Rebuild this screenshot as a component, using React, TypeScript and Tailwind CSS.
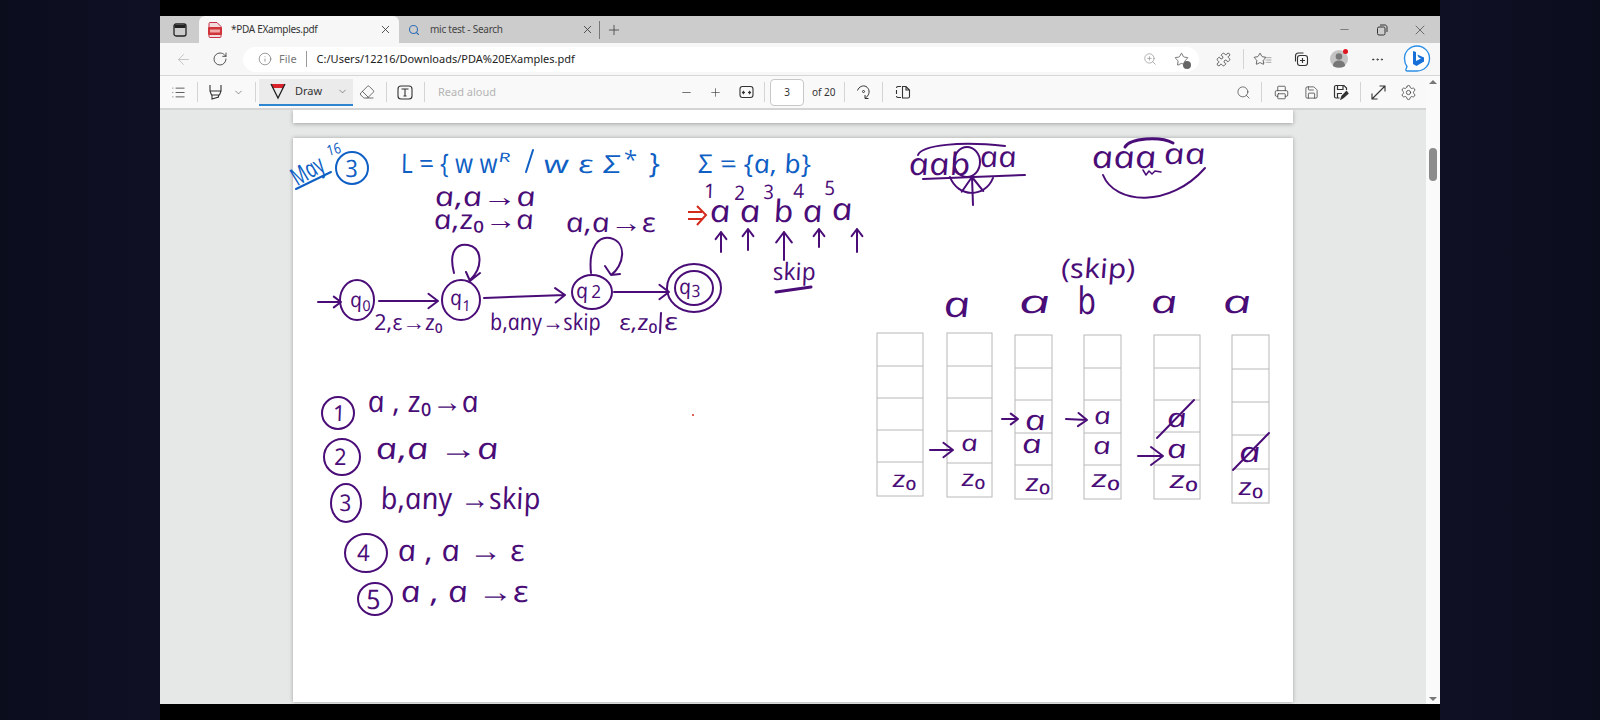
import React from 'react';
import { ArrowLeft, RotateCw, Info, ZoomIn, X, Plus, Minus, Search, ChevronDown, Eraser, Printer, Save, Settings, MoreHorizontal, Star, Puzzle, List } from 'lucide-react';

const PURPLE = 'fill-[#4a0d78]';
const BLUE = 'fill-[#0f5fc4]';

function T({ x, y, w, s, c = PURPLE, r = 0, children }: { x: number; y: number; w?: number; s: number; c?: string; r?: number; children: React.ReactNode }) {
  return (
    <text
      transform={`translate(${x} ${y}) rotate(${r}) skewX(10)`}
      fontSize={s}
      textLength={w}
      lengthAdjust={w ? 'spacingAndGlyphs' : undefined}
      className={`font-['Open_Sans'] italic ${c}`}
    >
      {children}
    </text>
  );
}

function A({ x1, y1, x2, y2, h = 9 }: { x1: number; y1: number; x2: number; y2: number; h?: number }) {
  const a = Math.atan2(y2 - y1, x2 - x1);
  const p = (d: number) => `${x2 + h * Math.cos(a + d)} ${y2 + h * Math.sin(a + d)}`;
  return <path d={`M${x1} ${y1}L${x2} ${y2}M${p(2.5)}L${x2} ${y2}L${p(-2.5)}`} />;
}

function E({ x, y, rx, ry }: { x: number; y: number; rx: number; ry: number }) {
  return <ellipse cx={x} cy={y} rx={rx} ry={ry} />;
}

function Stack({ x, w, top, bottom, lines }: { x: number; w: number; top: number; bottom: number; lines: number[] }) {
  return (
    <g className="fill-none stroke-[#b8b8b8]" strokeWidth={1}>
      <rect x={x} y={top} width={w} height={bottom - top} />
      {lines.map((l) => (
        <path key={l} d={`M${x} ${l}H${x + w}`} />
      ))}
    </g>
  );
}

function Ink() {
  return (
    <svg viewBox="293 138 1000 564" className="absolute inset-0 w-full h-full overflow-visible">
      <Stack x={877} w={46} top={333} bottom={496} lines={[366, 398, 430, 462]} />
      <Stack x={947} w={45} top={333} bottom={497} lines={[366, 398, 431, 463]} />
      <Stack x={1015} w={37} top={335} bottom={499} lines={[368, 400, 433, 465]} />
      <Stack x={1084} w={37} top={335} bottom={499} lines={[368, 400, 433, 465]} />
      <Stack x={1154} w={46} top={335} bottom={499} lines={[368, 400, 432, 465]} />
      <Stack x={1232} w={37} top={335} bottom={503} lines={[369, 402, 435, 469]} />

      {/* blue heading */}
      <T x={298} y={186} w={34} s={25} c={BLUE} r={-30}>May</T>
      <T x={329} y={156} w={14} s={15} c={BLUE} r={-15}>16</T>
      <T x={346} y={177} s={24} c={BLUE}>3</T>
      <g className="fill-none stroke-[#0f5fc4]" strokeWidth={2} strokeLinecap="round">
        <E x={352} y={168} rx={16} ry={16} />
        <path d="M296 189L331 172" />
        <path d="M526 172L533 150" />
      </g>
      <T x={402} y={173} w={97} s={27} c={BLUE}>L = {'{'} w w</T>
      <T x={499} y={162} w={12} s={13} c={BLUE}>R</T>
      <T x={545} y={173} w={77} s={25} c={BLUE}>w ε Σ</T>
      <T x={625} y={168} w={13} s={24} c={BLUE}>*</T>
      <T x={650} y={173} w={11} s={28} c={BLUE}>{'}'}</T>
      <T x={699} y={173} w={113} s={26} c={BLUE}>Σ = {'{'}a, b{'}'}</T>

      {/* input */}
      <T x={705} y={198} s={20}>1</T>
      <T x={735} y={200} s={20}>2</T>
      <T x={764} y={199} s={20}>3</T>
      <T x={794} y={198} s={20}>4</T>
      <T x={825} y={195} s={20}>5</T>
      <g className="fill-none stroke-[#d42a1c]" strokeWidth={2}>
        <path d="M688 212H702M688 219H702M697 206L706 215L697 225" />
      </g>
      <T x={711} y={222} w={21} s={31}>a</T>
      <T x={741} y={222} w={21} s={31}>a</T>
      <T x={775} y={222} w={20} s={31}>b</T>
      <T x={804} y={222} w={20} s={31}>a</T>
      <T x={833} y={220} w={21} s={31}>a</T>
      <T x={774} y={280} w={43} s={24}>skip</T>
      <T x={436} y={206} w={101} s={27}>a,a→a</T>
      <T x={435} y={229} w={100} s={27}>a,z₀→a</T>
      <T x={567} y={232} w={90} s={27}>a,a→ε</T>

      <g className="fill-none stroke-[#4a0d78]" strokeWidth={2} strokeLinecap="round" strokeLinejoin="round">
        <A x1={721} y1={252} x2={721} y2={232} />
        <A x1={748} y1={250} x2={748} y2={229} />
        <A x1={784} y1={260} x2={784} y2={232} h={13} />
        <A x1={819} y1={247} x2={819} y2={229} />
        <A x1={857} y1={252} x2={857} y2={229} />
        <path strokeWidth={3} d="M776 292L811 287" />

        {/* automaton */}
        <path d="M454 273C448 250 458 243 468 245C483 248 483 268 470 280M466 272L470 281L480 273" />
        <path d="M591 273C588 245 600 236 610 238C628 242 624 266 611 275M605 266L611 275L620 274" />
        <E x={357} y={300} rx={17} ry={20} />
        <E x={461} y={300} rx={19} ry={20} />
        <E x={592} y={292} rx={20} ry={17} />
        <E x={694} y={288} rx={27} ry={24} />
        <E x={694} y={288} rx={19} ry={17} />
        <A x1={318} y1={302} x2={341} y2={302} />
        <A x1={379} y1={301} x2={438} y2={301} h={12} />
        <A x1={484} y1={298} x2={565} y2={295} h={12} />
        <A x1={614} y1={292} x2={669} y2={292} h={12} />
        <path d="M661 313L660 333" />

        {/* top right */}
        <E x={967} y={162} rx={13} ry={15} />
        <path d="M918 155C922 145 960 141 1005 146" />
        <path d="M923 179L1025 175" />
        <path d="M950 177C958 198 985 198 993 178" />
        <A x1={973} y1={205} x2={972} y2={177} h={18} />
        <path d="M1125 147C1130 138 1160 136 1173 143" strokeWidth={3} />
        <path d="M1143 170L1146 175L1149 171L1152 174L1155 171L1161 172" strokeWidth={1.5} />
        <path d="M1103 175C1115 205 1170 208 1205 168" />

        {/* stack arrows */}
        <A x1={930} y1={450} x2={953} y2={450} h={12} />
        <A x1={1002} y1={419} x2={1018} y2={419} />
        <A x1={1066} y1={419} x2={1087} y2={420} h={11} />
        <A x1={1138} y1={456} x2={1163} y2={456} h={15} />
        <path d="M1157 438L1194 400" />
        <path d="M1233 470L1269 433" />

        {/* numbered list */}
        <E x={338} y={413} rx={16} ry={16} />
        <E x={342} y={457} rx={18} ry={18} />
        <E x={346} y={503} rx={15} ry={19} />
        <E x={366} y={553} rx={21} ry={19} />
        <E x={375} y={599} rx={17} ry={16} />
      </g>

      <T x={351} y={307} s={21}>q</T>
      <T x={363} y={311} s={15}>0</T>
      <T x={451} y={305} s={21}>q</T>
      <T x={463} y={311} s={15}>1</T>
      <T x={577} y={298} s={21}>q</T>
      <T x={592} y={298} s={18}>2</T>
      <T x={680} y={294} s={21}>q</T>
      <T x={692} y={297} s={17}>3</T>
      <T x={375} y={330} w={69} s={22}>2,ε→z₀</T>
      <T x={491} y={330} w={111} s={23}>b,any→skip</T>
      <T x={620} y={330} w={39} s={22}>ε,z₀</T>
      <T x={665} y={330} w={14} s={24}>ε</T>

      <T x={910} y={175} w={62} s={31}>aab</T>
      <T x={981} y={167} w={37} s={29}>aa</T>
      <T x={1093} y={168} w={65} s={31}>aaa</T>
      <T x={1165} y={164} w={42} s={29}>aa</T>
      <T x={1062} y={278} w={75} s={27}>(skip)</T>
      <T x={945} y={317} w={27} s={36}>a</T>
      <T x={1020} y={313} w={32} s={32}>a</T>
      <T x={1079} y={314} w={19} s={38}>b</T>
      <T x={1152} y={313} w={27} s={32}>a</T>
      <T x={1224} y={313} w={29} s={32}>a</T>

      <T x={893} y={487} w={25} s={23}>z₀</T>
      <T x={962} y={451} w={17} s={23}>a</T>
      <T x={962} y={486} w={25} s={23}>z₀</T>
      <T x={1026} y={430} w={21} s={28}>a</T>
      <T x={1023} y={453} w={20} s={26}>a</T>
      <T x={1026} y={491} w={26} s={24}>z₀</T>
      <T x={1095} y={424} w={17} s={24}>a</T>
      <T x={1094} y={454} w={18} s={24}>a</T>
      <T x={1092} y={487} w={30} s={24}>z₀</T>
      <T x={1168} y={427} w={20} s={26}>a</T>
      <T x={1168} y={458} w={20} s={26}>a</T>
      <T x={1170} y={488} w={30} s={24}>z₀</T>
      <T x={1240} y={462} w={22} s={28}>a</T>
      <T x={1239} y={495} w={26} s={24}>z₀</T>

      <T x={334} y={421} s={22}>1</T>
      <T x={335} y={465} s={23}>2</T>
      <T x={340} y={511} s={23}>3</T>
      <T x={358} y={561} s={23}>4</T>
      <T x={367} y={609} s={27}>5</T>
      <T x={369} y={412} w={111} s={30}>a , z₀→a</T>
      <T x={377} y={459} w={123} s={30}>a,a →a</T>
      <T x={382} y={509} w={160} s={30}>b,any →skip</T>
      <T x={399} y={561} w={127} s={30}>a , a → ε</T>
      <T x={402} y={602} w={128} s={30}>a , a →ε</T>
      <circle cx={693} cy={415} r={1} className="fill-[#d42a1c]" />
    </svg>
  );
}

function Restore() {
  return (
    <svg width="12" height="12" viewBox="0 0 12 12" className="fill-none stroke-[#333]">
      <rect x="1.5" y="3" width="7.5" height="8" rx="1.5" />
      <path d="M4 1H9C10 1 11 2 11 3V8" />
    </svg>
  );
}

function PdfIcon() {
  return (
    <svg width="14" height="16" viewBox="0 0 14 16">
      <path d="M1 1.5C1 .8 1.6 .5 2 .5H9L13 4.5V14.5C13 15.2 12.5 15.5 12 15.5H2C1.5 15.500 1 15.200 1 14.500Z" className="fill-[#f3dcdc] stroke-[#c4314b]" />
      <rect x="0" y="5" width="14" height="8" rx="1" className="fill-[#d13438]" />
      <rect x="2" y="7.500" width="10" height="3" className="fill-[#f0a8a8]" />
    </svg>
  );
}

function Divider({ className }: { className: string }) {
  return <div className={`w-px h-5 bg-[#d4d4d4] shrink-0 ${className}`} />;
}

function Slot({ className, children }: { className: string; children: React.ReactNode }) {
  return <div className={`flex items-center justify-center shrink-0 text-[#3c3c3c] ${className}`}>{children}</div>;
}

function TabBar() {
  return (
    <div className="h-[27px] bg-[#cccccc] flex items-end shrink-0">
      <Slot className="w-[39px] h-[27px]">
        <svg width="16" height="16" viewBox="0 0 16 16" className="fill-none stroke-[#222]" strokeWidth={1.3}>
          <rect x="2" y="2" width="12" height="12" rx="2" />
          <path d="M2.5 4.5H13.5" strokeWidth={3} />
        </svg>
      </Slot>
      <div className="w-[200px] h-[27px] bg-[#f7f7f7] rounded-t-md flex items-center pl-[9px] pr-[2px] shrink-0">
        <PdfIcon />
        <span className="ml-[9px] text-[10px] tracking-[-0.3px] text-[#333] font-['Noto_Sans'] flex-1 whitespace-nowrap">*PDA EXamples.pdf</span>
        <Slot className="w-6 h-6"><X size={13} strokeWidth={1.6} /></Slot>
      </div>
      <div className="w-[200px] h-[27px] flex items-center pl-[9px] shrink-0">
        <Search size={12} strokeWidth={2.2} className="text-[#2f6fb5]" />
        <span className="ml-[10px] text-[10px] tracking-[-0.25px] text-[#444] font-['Noto_Sans'] flex-1 whitespace-nowrap">mic test - Search</span>
        <Slot className="w-6 h-6"><X size={13} strokeWidth={1.6} /></Slot>
      </div>
      <div className="w-px h-[18px] bg-[#777] mb-1" />
      <Slot className="w-[28px] h-[27px]"><Plus size={16} strokeWidth={1.2} /></Slot>
      <div className="flex-1" />
      <Slot className="w-[37px] h-[27px]"><Minus size={13} strokeWidth={1} /></Slot>
      <Slot className="w-[38px] h-[27px]"><Restore /></Slot>
      <Slot className="w-[38px] h-[27px] mr-[1px]"><X size={16} strokeWidth={1} /></Slot>
    </div>
  );
}

function AddressBar() {
  return (
    <div className="h-[33px] bg-[#f7f7f7] border-b border-[#d6d6d6] flex items-center shrink-0">
      <Slot className="w-[46px] h-7 text-[#b8b8b8]"><ArrowLeft size={17} strokeWidth={1.1} /></Slot>
      <Slot className="w-[28px] h-7"><RotateCw size={16} strokeWidth={1.3} /></Slot>
      <div className="ml-[9px] w-[956px] h-[25px] rounded-full bg-white flex items-center shrink-0">
        <Slot className="ml-[14px] w-4 h-4 text-[#666]"><Info size={14} strokeWidth={1.1} /></Slot>
        <span className="ml-[6px] text-[11px] text-[#777] font-['Noto_Sans']">File</span>
        <div className="ml-[9px] w-px h-4 bg-[#999]" />
        <span className="ml-[10px] text-[11px] text-[#222] font-['Noto_Sans'] whitespace-nowrap">C:/Users/12216/Downloads/PDA%20EXamples.pdf</span>
        <div className="flex-1" />
        <Slot className="w-5 h-5 text-[#888]"><ZoomIn size={14} strokeWidth={1.1} /></Slot>
        <Slot className="ml-[11px] mr-[8px] w-5 h-5">
          <span className="relative flex">
            <Star size={15} strokeWidth={1.1} />
            <span className="absolute -right-[2px] -bottom-[2px] w-[8px] h-[8px] rounded-full bg-[#666]" />
          </span>
        </Slot>
      </div>
      <Slot className="ml-[8px] w-[32px] h-7"><Puzzle size={15} strokeWidth={1.3} /></Slot>
      <Divider className="ml-[4px]" />
      <Slot className="ml-[1px] w-[38px] h-7">
        <span className="relative flex"><Star size={14} strokeWidth={1.3} className="-translate-x-1" /><List size={8} strokeWidth={1.3} className="absolute -right-[1px] top-[4px]" /></span>
      </Slot>
      <Slot className="w-[36px] h-7">
        <svg width="16" height="16" viewBox="0 0 16 16" className="fill-none stroke-[#333]" strokeWidth={1.1}>
          <rect x="4.5" y="4.5" width="10" height="10" rx="2.5" />
          <path d="M9.5 7V12M7 9.5H12M2.5 10.5V5C2.5 3 3.5 2 5.5 2H10.5" />
        </svg>
      </Slot>
      <Slot className="w-[40px] h-7">
        <div className="relative w-[18px] h-[18px] rounded-full bg-[#c4c4c4] flex items-center justify-center overflow-visible">
          <svg width="18" height="18" viewBox="0 0 18 18" className="fill-[#777]">
            <circle cx="9" cy="6.5" r="3.3" />
            <path d="M3 16C3 12 6 10.5 9 10.5C12 10.5 15 12 15 16C12 18 6 18 3 16Z" />
          </svg>
          <span className="absolute -top-[1px] right-0 w-[5px] h-[5px] rounded-full bg-[#e0141e]" />
        </div>
      </Slot>
      <Slot className="w-[36px] h-7"><MoreHorizontal size={15} strokeWidth={1.6} /></Slot>
      <Slot className="w-[44px] h-8">
        <svg width="28" height="30" viewBox="0 0 28 30">
          <path d="M14 2C21 2 26.5 7.5 26.5 14.5C26.5 21.5 21 27 14 27H4.5C3 27 2.5 26 3 25L4 22.5C2.5 20.500 1.500 17.500 1.500 14.500C1.500 7.500 7 2 14 2Z" className="fill-white stroke-[#2b8fe6]" strokeWidth={1.4} />
          <path d="M10 7L13 8V17L18 14.500L15.500 13.300L14.300 10.500L21 13.500V17.500L13.500 22L10 20Z" className="fill-[#1670d8]" />
        </svg>
      </Slot>
    </div>
  );
}

function Toolbar() {
  return (
    <div className="h-[34px] bg-[#f9f9f9] border-b-2 border-[#d4d4d4] flex items-center shrink-0">
      <div className="w-[512px] flex items-center shrink-0">
        <Slot className="w-[37px] h-6"><List size={15} strokeWidth={1.3} /></Slot>
        <Divider className="" />
        <Slot className="w-[34px] h-6">
          <svg width="15" height="17" viewBox="0 0 15 17" className="fill-none stroke-[#333]" strokeWidth={1.1}>
            <path d="M2 1V7H13V1M2 7L3.500 11H11.500L13 7M4 11V15L10.500 13V11" />
          </svg>
        </Slot>
        <Slot className="w-[12px] h-6"><ChevronDown size={11} strokeWidth={1.2} /></Slot>
        <Divider className="ml-[11px]" />
        <div className="ml-[3px] w-[94px] h-[27px] bg-[#ebebeb] border-b-2 border-[#2f86d0] flex items-center shrink-0">
          <svg width="16" height="18" viewBox="0 0 16 18" className="ml-[11px] shrink-0">
            <path d="M1 2H15L13 6H3Z" className="fill-[#d8232a]" />
            <path d="M1 2L8 16L15 2M3.500 7L8 16L12.500 7" className="fill-none stroke-[#222]" strokeWidth={1.3} />
          </svg>
          <span className="ml-[9px] w-[30px] text-[11px] text-[#333] font-['Noto_Sans']">Draw</span>
          <Slot className="ml-[11px] w-3 h-4"><ChevronDown size={11} strokeWidth={1.2} /></Slot>
        </div>
        <Slot className="w-[28px] h-6"><Eraser size={16} strokeWidth={1.1} /></Slot>
        <Divider className="ml-[5px]" />
        <Slot className="w-[36px] h-6">
          <svg width="16" height="15" viewBox="0 0 16 15" className="fill-none stroke-[#333]" strokeWidth={1.1}>
            <rect x="1" y="1" width="14" height="13" rx="3" />
            <path d="M4.500 4H11.500M8 4V11M6.500 11H9.500" />
          </svg>
        </Slot>
        <Divider className="ml-px" />
        <span className="ml-[13px] text-[11px] text-[#b4b4b4] font-['Noto_Sans'] whitespace-nowrap">Read aloud</span>
      </div>
      <Slot className="w-[28px] h-6"><Minus size={13} strokeWidth={1.3} /></Slot>
      <Slot className="w-[30px] h-6"><Plus size={13} strokeWidth={1.2} /></Slot>
      <Slot className="w-[32px] h-6">
        <svg width="15" height="14" viewBox="0 0 15 14" className="fill-none stroke-[#333]" strokeWidth={1.1}>
          <rect x="1" y="1.500" width="13" height="11" rx="2.500" />
          <path d="M3.500 7.500H6M5 6L3.500 7.500L5 9M9 7.500H11.500M10 6L11.500 7.500L10 9" />
        </svg>
      </Slot>
      <Divider className="ml-[2px]" />
      <div className="ml-[5px] w-[34px] h-[27px] rounded-sm border border-[#c8c8c8] bg-white flex items-center justify-center shrink-0">
        <span className="text-[10px] text-[#333] font-['Noto_Sans']">3</span>
      </div>
      <span className="ml-[8px] w-[32px] text-[10px] text-[#333] font-['Noto_Sans'] whitespace-nowrap">of 20</span>
      <Divider className="" />
      <Slot className="w-[37px] h-6">
        <svg width="15" height="16" viewBox="0 0 15 16" className="fill-none stroke-[#333]" strokeWidth={1}>
          <path d="M1.500 6.500C3 2.500 7 1 10 2.500C13.500 4.500 14 9 11.500 12L9.500 14M9 11V14.500H12.500" />
          <circle cx="7.500" cy="7.500" r="1" />
        </svg>
      </Slot>
      <Divider className="" />
      <Slot className="w-[40px] h-6">
        <svg width="16" height="14" viewBox="0 0 16 14" className="fill-none stroke-[#333]" strokeWidth={1.1}>
          <path d="M6 1.500H3C2 1.500 1.500 2 1.500 3M1.500 5V9M1.500 11C1.500 12 2 12.500 3 12.500H6" />
          <path d="M7.500 1V13H13C14 13 14.500 12.500 14.500 11.500V5L11 1.500H7.500M11 1.500V5H14.500" />
        </svg>
      </Slot>
      <div className="flex-1" />
      <Slot className="w-[36px] h-6"><Search size={15} strokeWidth={1.1} /></Slot>
      <Divider className="" />
      <Slot className="w-[38px] h-6"><Printer size={15} strokeWidth={1.2} /></Slot>
      <Slot className="w-[22px] h-6"><Save size={15} strokeWidth={1.2} /></Slot>
      <Slot className="w-[38px] h-6">
        <svg width="16" height="16" viewBox="0 0 16 16" className="fill-none stroke-[#333]" strokeWidth={1.2}>
          <path d="M13.500 6V4L11 1.500H3C2 1.500 1.500 2 1.500 3V12.500C1.500 13.500 2 14 3 14H6.500M4.500 2V5.500H10V2M4.500 14V9.500H9" />
          <path d="M8 15L9 12L13.500 7.500L15 9.500L10.500 13.500Z" className="fill-[#333]" />
        </svg>
      </Slot>
      <Divider className="" />
      <Slot className="w-[35px] h-6">
        <svg width="15" height="15" viewBox="0 0 15 15" className="fill-none stroke-[#333]" strokeWidth={1.1}>
          <path d="M1 14L14 1M8.500 1H14V6.500M1 8.500V14H6.500" />
        </svg>
      </Slot>
      <Slot className="w-[24px] h-6 mr-[6px]"><Settings size={17} strokeWidth={1.1} /></Slot>
    </div>
  );
}

function Scrollbar() {
  return (
    <div className="w-[14px] bg-[#fafafa] flex flex-col items-center shrink-0 pt-[4px] pb-[3px]">
      <div className="w-0 h-0 border-x-[4px] border-x-transparent border-b-[4px] border-b-[#777]" />
      <div className="mt-[64px] w-[8px] h-[33px] rounded-full bg-[#8c8c8c]" />
      <div className="flex-1" />
      <div className="w-0 h-0 border-x-[4px] border-x-transparent border-t-[4px] border-t-[#777]" />
    </div>
  );
}

export default function App() {
  return (
    <div className="w-[1600px] h-[720px] flex overflow-hidden">
      <div className="w-[160px] h-full bg-gradient-to-r from-[#0b0c1c] to-[#0f1024] shrink-0" />
      <div className="w-[1280px] h-full flex flex-col bg-black shrink-0">
        <div className="h-4 shrink-0" />
        <div className="h-[688px] flex flex-col shrink-0">
          <TabBar />
          <AddressBar />
          <div className="flex-1 flex min-h-0">
            <div className="flex-1 flex flex-col min-w-0">
              <Toolbar />
              <div className="flex-1 bg-[#e6e8e7] flex flex-col items-center overflow-hidden pb-[2px]">
                <div className="w-[1000px] h-[13px] bg-white shadow-[0_1px_4px_rgba(0,0,0,0.3)] shrink-0" />
                <div className="relative mt-[15px] w-[1000px] h-[564px] bg-white shadow-[0_0_4px_rgba(0,0,0,0.3)] shrink-0">
                  <Ink />
                </div>
              </div>
            </div>
            <Scrollbar />
          </div>
        </div>
        <div className="h-4 shrink-0" />
      </div>
      <div className="w-[160px] h-full bg-gradient-to-r from-[#0f1024] to-[#0b0c1c] shrink-0" />
    </div>
  );
}
